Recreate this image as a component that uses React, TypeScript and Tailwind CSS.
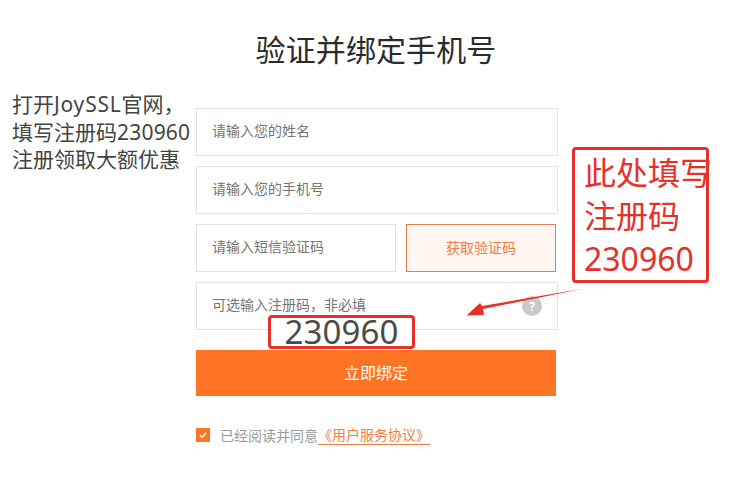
import React from "react";

const font = "font-['Noto_Sans','Noto_Sans_CJK_SC',sans-serif]";

function Field({ label, className }: { label: string; className: string }) {
  return (
    <div className={`h-12 border border-[#e3e3e3] bg-white pl-[15px] pb-[2px] flex items-center text-[14px] leading-none text-[#757575] ${className}`}>
      {label}
    </div>
  );
}

export default function App() {
  return (
    <main className={`relative w-[752px] h-[488px] overflow-hidden bg-white ${font}`}>
      <h1 className="pt-[28px] h-[108px] text-center text-[30px] leading-[44px] font-normal tracking-[0.1px] text-[#2b2b2b]">
        验证并绑定手机号
      </h1>

      {/* Form */}
      <div className="ml-[196px] w-[362px] flex flex-col gap-[10px]">
        <Field label="请输入您的姓名" className="w-[362px]" />
        <Field label="请输入您的手机号" className="w-[362px]" />
        <div className="flex gap-[10px]">
          <Field label="请输入短信验证码" className="w-[200px]" />
          <button className="w-[150px] h-12 border border-[#e08050] bg-[#fff6f2] pb-[2px] text-[14px] text-[#ee7d45]">
            获取验证码
          </button>
        </div>
        <div className="relative">
          <Field label="可选输入注册码，非必填" className="w-[362px]" />
          <div className="absolute left-[312px] top-[13px] w-px h-[20px] bg-[#f4f4f4]" />
          <div className="absolute left-[326px] top-[14px] w-[20px] h-[20px] rounded-full bg-[#c9c9c9] text-white text-[13px] font-bold leading-[20px] text-center">
            ?
          </div>
        </div>
        <button className="mt-[10px] w-[360px] h-[46px] bg-[#ff7325] text-white text-[16px]">立即绑定</button>
        <div className="mt-[14px] flex items-center h-[30px] text-[14px] text-[#9a9a9a]">
          <span className="w-[14px] h-[14px] bg-[#ff7325] flex items-center justify-center">
            <svg width="10" height="10" viewBox="0 0 10 10" fill="none">
              <path d="M2 5.2 L4.2 7.4 L8 2.8" stroke="white" strokeWidth="1.6" />
            </svg>
          </span>
          <span className="ml-[10px]">已经阅读并同意</span>
          <span className="text-[#ee7d45] border-b border-[#ee7d45] leading-[18px]">《用户服务协议》</span>
        </div>
      </div>

      {/* Annotations pasted over the page */}
      <div className="absolute left-[12px] top-[91px] text-[21px] leading-[27.5px] text-[#444] whitespace-nowrap">
        打开<span className="tracking-[0.8px]">JoySSL</span>官网，
        <br />
        填写注册码<span className="tracking-[0.2px]">230960</span>
        <br />
        注册领取大额优惠
      </div>

      <div className="absolute left-[572px] top-[147px] w-[137px] h-[136px] border-[3px] border-[#e8302a] rounded-[4px] pl-[9px] pt-[1px] text-[32px] leading-[43px] text-[#e8302a] whitespace-nowrap">
        此处填写
        <br />
        注册码
        <br />
        230960
      </div>

      <svg className="absolute left-[460px] top-[284px]" width="130" height="36" viewBox="0 0 130 36" fill="none">
        <path d="M124 4.5 L23 25 L24 31 L6.5 31.5 L20 19 L22 22 Z" fill="#e8302a" />
      </svg>

      <div className="absolute left-[268px] top-[315px] w-[147px] h-[34px] border-[3px] border-[#e8302a] rounded-[4px] bg-white text-center text-[33px] leading-[28px] tracking-[0.1px] text-[#4a4a4a]">
        230960
      </div>
    </main>
  );
}
